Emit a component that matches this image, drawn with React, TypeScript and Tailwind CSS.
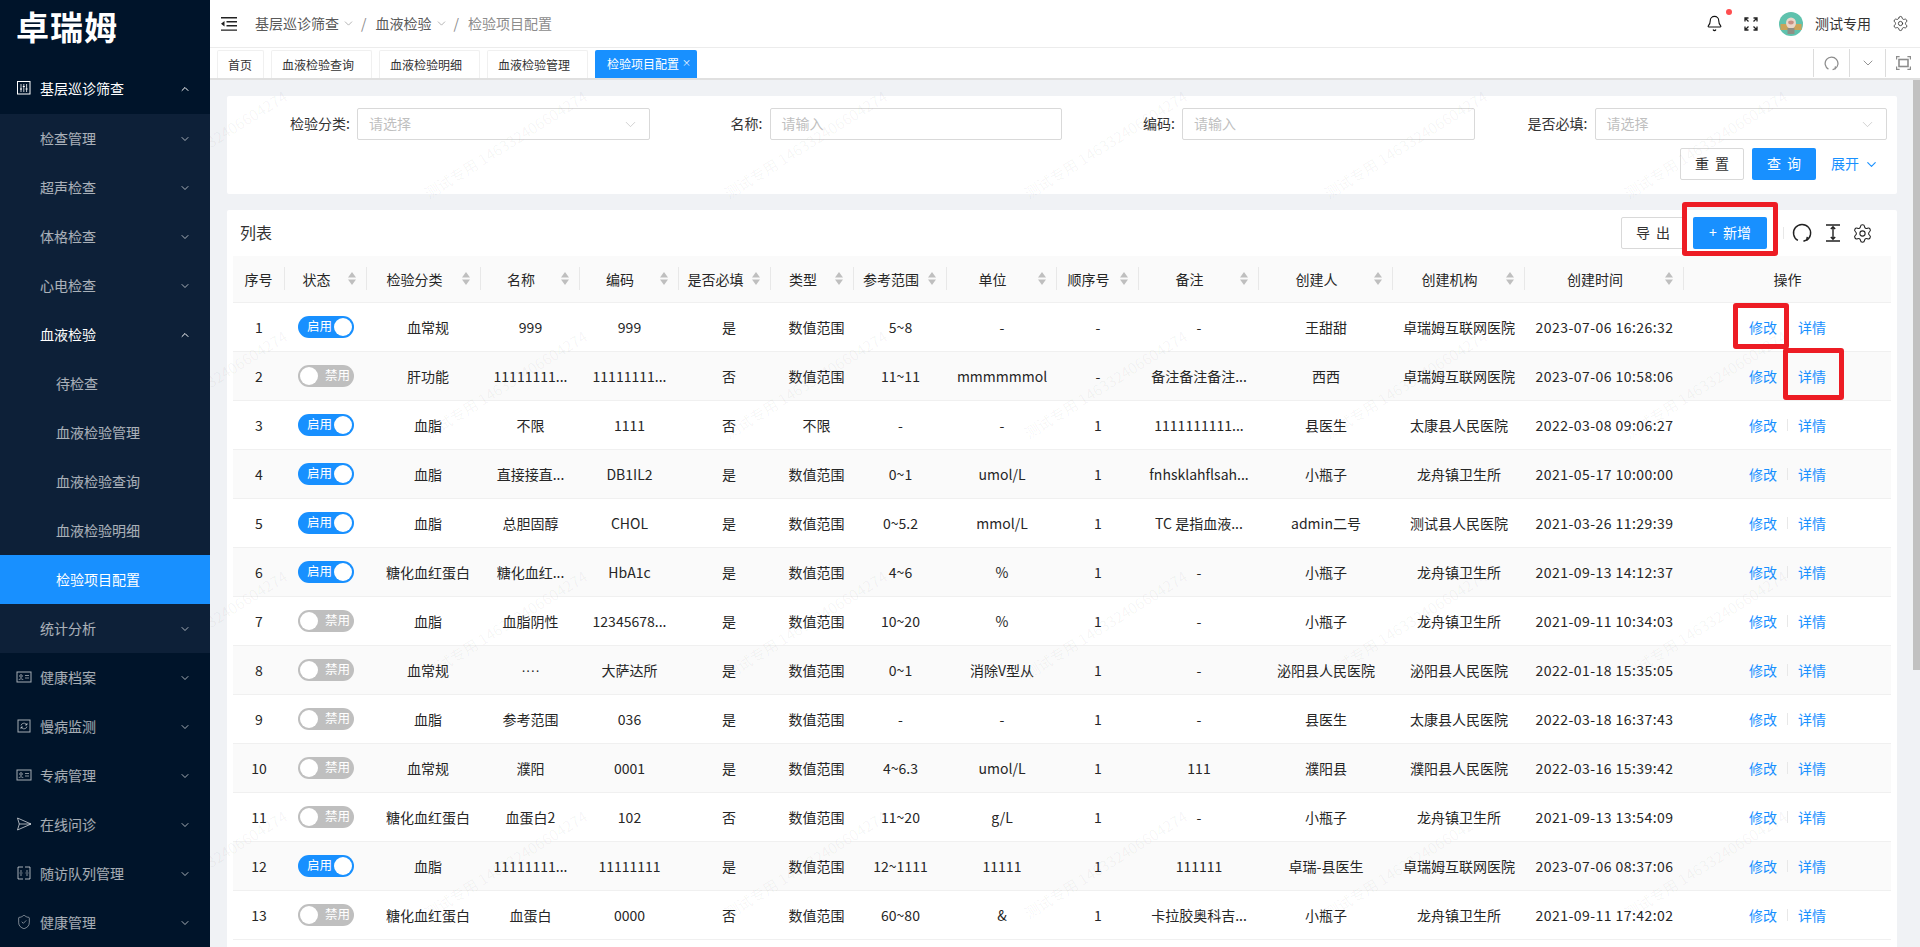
import React from "react";
import { ChevronDown, ChevronUp, Settings, ShieldCheck, Bell } from "lucide-react";

const FONT = "[font-family:'Noto_Sans_CJK_SC','Noto_Sans',sans-serif]";

const Icon = ({ children, size = 16, className = "" }: { children: React.ReactNode; size?: number; className?: string }) => (
  <svg width={size} height={size} viewBox="0 0 16 16" fill="none" stroke="currentColor" strokeWidth="1" className={className}>
    {children}
  </svg>
);

const SlidersIcon = () => (
  <Icon>
    <rect x="1.500" y="1.500" width="12.500" height="12.500" />
    <path d="M5 4v8M7.800 4v8M10.600 4v8" strokeWidth=".8" />
    <path d="M4 9h2M6.800 6.500h2M9.600 9h2" strokeWidth="1.200" />
  </Icon>
);
const CardIcon = () => (
  <Icon>
    <rect x="1" y="3" width="14" height="10" />
    <circle cx="5" cy="7" r="1.300" strokeWidth=".8" />
    <path d="M2.800 11c.3-1.600 4.100-1.600 4.400 0M9 6.500h4M9 9h4" strokeWidth=".8" />
  </Icon>
);
const RefreshBoxIcon = () => (
  <Icon>
    <rect x="2" y="2" width="12" height="12" />
    <path d="M5 7.500a3 3 0 0 1 5-1.500l1 1M11 8.500a3 3 0 0 1-5 1.500l-1-1M11 5v2h-2M5 11V9h2" strokeWidth=".8" />
  </Icon>
);
const SendIcon = () => (
  <Icon>
    <path d="M1.500 2 15 8 1.500 14l1.800-6zM3.300 8H15" />
  </Icon>
);
const FramesIcon = () => (
  <Icon>
    <path d="M7 2H2v12h5M9 2h5v12H9" />
    <path d="M5 5v2M5 9v2M11 5v2M11 9v2M3.500 8h3M9.500 8h3" strokeWidth=".8" />
  </Icon>
);

const topItems: [string, React.ReactNode][] = [
  ["健康档案", <CardIcon />],
  ["慢病监测", <RefreshBoxIcon />],
  ["专病管理", <CardIcon />],
  ["在线问诊", <SendIcon />],
  ["随访队列管理", <FramesIcon />],
  ["健康管理", <ShieldCheck size={16} strokeWidth={1.1} />],
];

const MenuRow = ({
  label,
  icon,
  open,
  indent = "pl-10",
  arrow = true,
  active = false,
  white = false,
}: {
  label: string;
  icon?: React.ReactNode;
  open?: boolean;
  indent?: string;
  arrow?: boolean;
  active?: boolean;
  white?: boolean;
}) => (
  <div
    className={`relative flex h-[49px] items-center text-sm ${indent} ${
      active ? "bg-[#1890ff] text-white" : white ? "text-white" : "text-white/65"
    }`}
  >
    {icon && <span className="absolute left-4 top-4 h-4 w-4">{icon}</span>}
    <span className="flex-1 pb-[2px]">{label}</span>
    {arrow && (
      <span className="mr-[19px]">
        {open ? <ChevronUp size={12} strokeWidth={2} /> : <ChevronDown size={12} strokeWidth={2} />}
      </span>
    )}
  </div>
);

const Sidebar = () => (
  <aside className="z-10 h-full w-[210px] shrink-0 overflow-hidden bg-[#00142a]">
    <div className="flex h-16 items-start pl-[16px] pt-[3px]">
      <span className="text-[33px] font-bold leading-[46px] tracking-[1px] text-white">卓瑞姆</span>
    </div>
    <MenuRow label="基层巡诊筛查" icon={<SlidersIcon />} open white />
    <div className="mt-px bg-[#0d2038]">
      <MenuRow label="检查管理" />
      <MenuRow label="超声检查" />
      <MenuRow label="体格检查" />
      <MenuRow label="心电检查" />
      <MenuRow label="血液检验" open white />
      <MenuRow label="待检查" indent="pl-14" arrow={false} />
      <MenuRow label="血液检验管理" indent="pl-14" arrow={false} />
      <MenuRow label="血液检验查询" indent="pl-14" arrow={false} />
      <MenuRow label="血液检验明细" indent="pl-14" arrow={false} />
      <MenuRow label="检验项目配置" indent="pl-14" arrow={false} active />
      <MenuRow label="统计分析" />
    </div>
    {topItems.map(([label, icon]) => (
      <MenuRow key={label} label={label} icon={icon} />
    ))}
  </aside>
);

const ReloadIcon = ({ size = 18, stroke = 1.3 }: { size?: number; stroke?: number }) => (
  <svg width={size} height={size} viewBox="0 0 18 18" fill="none" stroke="currentColor" strokeWidth={stroke}>
    <path d="M5.300 15.700A7.700 7.700 0 1 1 13 15.600" />
    <path d="M10.300 16.400 13.200 15.300 13.800 12.500" />
  </svg>
);

const Header = () => (
  <div className="flex h-[48px] items-center border-b border-[#ececec] bg-white pl-[11px] text-sm">
    <svg width="16" height="14" viewBox="0 0 16 14" fill="currentColor" className="text-[#222]">
      <path d="M0 0h16v1.400H0zM5.500 4H16v1.400H5.500zM5.500 8H16v1.400H5.500zM0 12.400h16v1.400H0zM0 6.700 3.500 4v5.400z" />
    </svg>
    <span className="ml-[18px] pb-[2px] text-[#595959]">基层巡诊筛查</span>
    <ChevronDown size={13} strokeWidth={1.2} className="ml-[3px] text-[#8c8c8c]" />
    <span className="ml-[6px] mr-[9px] pb-[2px] text-[#8c8c8c]">/</span>
    <span className="pb-[2px] text-[#595959]">血液检验</span>
    <ChevronDown size={13} strokeWidth={1.2} className="ml-[3px] text-[#8c8c8c]" />
    <span className="ml-[6px] mr-[9px] pb-[2px] text-[#8c8c8c]">/</span>
    <span className="pb-[2px] text-[#8c8c8c]">检验项目配置</span>
    <div className="ml-auto flex items-center">
      <span className="relative text-[#111]">
        <Bell size={17} strokeWidth={1.6} />
        <span className="absolute -right-[9px] -top-[6px] h-[6px] w-[6px] rounded-full bg-[#ff4d4f]" />
      </span>
      <svg width="14" height="14" viewBox="0 0 14 14" fill="none" stroke="#222" strokeWidth="1.3" className="ml-[21px]">
        <path d="M1 4.500V1h3.500M1 1l3.500 3.500M13 4.500V1H9.500M13 1 9.500 4.500M1 9.500V13h3.500M1 13l3.500-3.500M13 9.500V13H9.500M13 13 9.500 9.500" />
      </svg>
      <svg width="24" height="24" viewBox="0 0 24 24" className="ml-[21px]">
        <circle cx="12" cy="12" r="12" fill="#5fc2ad" />
        <rect x="1.500" y="12" width="21" height="6" fill="#c9a45a" />
        <ellipse cx="12" cy="11" rx="5" ry="5.500" fill="#ead7c9" />
        <ellipse cx="12" cy="10.500" rx="2.800" ry="1.900" fill="#c98f82" />
        <rect x="8.500" y="16" width="7" height="6" fill="#8e8f85" />
      </svg>
      <span className="ml-3 pb-[2px] text-[#333]">测试专用</span>
      <Settings size={17} strokeWidth={1.2} className="ml-[21px] mr-[11px] text-[#333]" />
    </div>
  </div>
);

const tabs = ["首页", "血液检验查询", "血液检验明细", "血液检验管理"];

const TabBar = () => (
  <div className="flex h-[32px] border-b-2 border-[#e0e0e0] bg-white pl-[7px] text-xs">
    {tabs.map((t, i) => (
      <div
        key={t}
        className={`mt-[2px] mr-[7px] flex h-[28px] items-center rounded-t-[2px] border border-b-0 border-[#f0f0f0] pl-[10px] text-[#333] ${
          i === 0 ? "w-[47px]" : "w-[101px]"
        }`}
      >
        {t}
      </div>
    ))}
    <div className="mt-[2px] flex h-[28px] w-[102px] items-center rounded-t-[2px] bg-[#1890ff] pl-[12px] text-white">
      检验项目配置
      <span className="mb-[3px] ml-[3px] text-[9px] leading-[12px]">×</span>
    </div>
    <div className="ml-auto flex h-full">
      <div className="my-[1px] flex h-[28px] w-[36px] items-center justify-center border-l border-[#dcdcdc] text-[#8c8c8c]">
        <ReloadIcon size={15} stroke={1.5} />
      </div>
      <div className="my-[1px] flex h-[28px] w-[36px] items-center justify-center border-l border-[#dcdcdc] text-[#8c8c8c]">
        <ChevronDown size={16} strokeWidth={1.4} />
      </div>
      <div className="my-[1px] flex h-[28px] w-[35px] items-center justify-center border-l border-[#dcdcdc] text-[#8c8c8c]">
        <svg width="15" height="14" viewBox="0 0 15 14" fill="none" stroke="currentColor" strokeWidth="1.200">
          <path d="M.600 3.500V.600h3M11.400.600h3v2.900M14.400 10.500v2.900h-3M3.600 13.400h-3v-2.900" />
          <rect x="3" y="3.500" width="9" height="7" strokeWidth="1.600" />
        </svg>
      </div>
    </div>
  </div>
);

const Field = ({ label, placeholder, select }: { label: string; placeholder: string; select?: boolean }) => (
  <div className="flex h-8 items-center">
    <label className="w-[120px] shrink-0 pb-[2px] pr-[7px] text-right text-sm text-[#333]">{label}:</label>
    <div className="flex h-8 flex-1 items-center rounded-[2px] border border-[#d9d9d9] bg-white pl-[11px] pr-[10px] text-sm text-[#bfbfbf]">
      <span className="flex-1 pb-[2px]">{placeholder}</span>
      {select && <ChevronDown size={17} strokeWidth={1} className="text-[#bfbfbf]" />}
    </div>
  </div>
);

const FilterCard = () => (
  <div className="h-[98px] rounded-[2px] bg-white px-[10px] pt-[12px]">
    <div className="grid grid-cols-4">
      <Field label="检验分类" placeholder="请选择" select />
      <Field label="名称" placeholder="请输入" />
      <Field label="编码" placeholder="请输入" />
      <Field label="是否必填" placeholder="请选择" select />
    </div>
    <div className="mt-[8px] flex items-center justify-end pr-[8px] text-sm">
      <button className="h-8 w-16 rounded-[2px] border border-[#d9d9d9] bg-white pb-[2px] text-[#333] [word-spacing:3px]">重 置</button>
      <button className="ml-2 h-8 w-16 rounded-[2px] bg-[#1890ff] pb-[2px] text-white [word-spacing:3px]">查 询</button>
      <span className="ml-[15px] pb-[2px] text-[#1890ff]">展开</span>
      <ChevronDown size={15} strokeWidth={1.8} className="ml-[5px] text-[#1890ff]" />
    </div>
  </div>
);

type Row = (string | boolean)[];
const rows: Row[] = [
  [true, "血常规", "999", "999", "是", "数值范围", "5~8", "-", "-", "-", "王甜甜", "卓瑞姆互联网医院", "2023-07-06 16:26:32"],
  [false, "肝功能", "11111111...", "11111111...", "否", "数值范围", "11~11", "mmmmmmol", "-", "备注备注备注...", "西西", "卓瑞姆互联网医院", "2023-07-06 10:58:06"],
  [true, "血脂", "不限", "1111", "否", "不限", "-", "-", "1", "1111111111...", "县医生", "太康县人民医院", "2022-03-08 09:06:27"],
  [true, "血脂", "直接接直...", "DB1IL2", "是", "数值范围", "0~1", "umol/L", "1", "fnhsklahflsah...", "小瓶子", "龙舟镇卫生所", "2021-05-17 10:00:00"],
  [true, "血脂", "总胆固醇", "CHOL", "是", "数值范围", "0~5.2", "mmol/L", "1", "TC 是指血液...", "admin二号", "测试县人民医院", "2021-03-26 11:29:39"],
  [true, "糖化血红蛋白", "糖化血红...", "HbA1c", "是", "数值范围", "4~6", "%", "1", "-", "小瓶子", "龙舟镇卫生所", "2021-09-13 14:12:37"],
  [false, "血脂", "血脂阴性", "12345678...", "是", "数值范围", "10~20", "%", "1", "-", "小瓶子", "龙舟镇卫生所", "2021-09-11 10:34:03"],
  [false, "血常规", "····", "大萨达所", "是", "数值范围", "0~1", "消除V型从", "1", "-", "泌阳县人民医院", "泌阳县人民医院", "2022-01-18 15:35:05"],
  [false, "血脂", "参考范围", "036", "是", "数值范围", "-", "-", "1", "-", "县医生", "太康县人民医院", "2022-03-18 16:37:43"],
  [false, "血常规", "濮阳", "0001", "是", "数值范围", "4~6.3", "umol/L", "1", "111", "濮阳县", "濮阳县人民医院", "2022-03-16 15:39:42"],
  [false, "糖化血红蛋白", "血蛋白2", "102", "否", "数值范围", "11~20", "g/L", "1", "-", "小瓶子", "龙舟镇卫生所", "2021-09-13 13:54:09"],
  [true, "血脂", "11111111...", "11111111", "是", "数值范围", "12~1111", "11111", "1", "111111", "卓瑞-县医生", "卓瑞姆互联网医院", "2023-07-06 08:37:06"],
  [false, "糖化血红蛋白", "血蛋白", "0000", "否", "数值范围", "60~80", "&", "1", "卡拉胶奥科吉...", "小瓶子", "龙舟镇卫生所", "2021-09-11 17:42:02"],
];

const columns: [string, number, boolean][] = [
  ["序号", 52, false],
  ["状态", 82, true],
  ["检验分类", 114, true],
  ["名称", 99, true],
  ["编码", 99, true],
  ["是否必填", 92, true],
  ["类型", 83, true],
  ["参考范围", 93, true],
  ["单位", 110, true],
  ["顺序号", 82, true],
  ["备注", 120, true],
  ["创建人", 134, true],
  ["创建机构", 132, true],
  ["创建时间", 159, true],
  ["操作", 207, false],
];

const SortCarets = () => (
  <svg width="8" height="13" viewBox="0 0 8 13" fill="#bfbfbf" className="shrink-0">
    <path d="M4 0 8 5.500H0zM4 13 0 7.500h8z" />
  </svg>
);

const Switch = ({ on }: { on: boolean }) => (
  <div
    className={`mx-auto flex h-[22px] w-[56px] items-center rounded-full px-[2px] text-[12.5px] text-white ${
      on ? "bg-[#1890ff]" : "bg-[#bfbfbf]"
    }`}
  >
    {on ? (
      <>
        <span className="ml-[5px] flex-1 pb-[1px]">启用</span>
        <span className="h-[18px] w-[18px] rounded-full bg-white" />
      </>
    ) : (
      <>
        <span className="h-[18px] w-[18px] rounded-full bg-white" />
        <span className="ml-[5px] flex-1 pb-[1px]">禁用</span>
      </>
    )}
  </div>
);

const shifted = new Set([1, 4, 5]);

const ListCard = () => (
  <div className="flex-1 rounded-t-[2px] bg-white px-[6px]">
    <div className="flex h-[46px] items-center">
      <span className="ml-[7px] pb-[2px] text-base text-[#333]">列表</span>
      <div className="ml-auto flex items-center text-sm">
        <button className="h-8 w-16 rounded-[2px] border border-[#d9d9d9] bg-white pb-[2px] text-[#333] [word-spacing:3px]">导 出</button>
        <button className="ml-2 h-8 w-[74px] rounded-[2px] bg-[#1890ff] pb-[2px] text-white [word-spacing:3px]">+ 新增</button>
        <span className="ml-4 h-3 w-px bg-[#e8e8e8]" />
        <span className="ml-[8px] text-[#222]">
          <svg width="20" height="20" viewBox="0 0 18 18" fill="none" stroke="currentColor" strokeWidth="1.300">
            <path d="M5.300 15.700A7.700 7.700 0 1 1 13 15.600" />
            <path d="M10.300 16.400 13.200 15.300 13.800 12.500" />
          </svg>
        </span>
        <svg width="16" height="18" viewBox="0 0 16 18" fill="none" stroke="#222" strokeWidth="1.400" className="ml-[13px]">
          <path d="M1 1h14M1 17h14M8 3v12M5.800 5 8 2.800 10.200 5M5.800 13 8 15.200 10.200 13" />
        </svg>
        <Settings size={21} strokeWidth={1.200} className="ml-[11px] mr-[18px] text-[#222]" />
      </div>
    </div>
    <table className="w-full table-fixed border-collapse text-sm text-[#262626]">
      <colgroup>
        {columns.map(([n, w]) => (
          <col key={n} width={w} />
        ))}
      </colgroup>
      <thead>
        <tr className="h-[46px] border-b border-[#f0f0f0] bg-[#fafafa]">
          {columns.map(([n, , sort], i) => (
            <th key={n} className="p-0 font-normal">
              <div
                className={`flex h-[23px] items-center ${sort ? "pr-[10px]" : ""} ${
                  i === columns.length - 1 ? "" : "border-r border-[#e8e8e8]"
                }`}
              >
                <span className="flex-1 whitespace-nowrap text-center">{n}</span>
                {sort && <SortCarets />}
              </div>
            </th>
          ))}
        </tr>
      </thead>
      <tbody>
        {rows.map((r, idx) => (
          <tr key={idx} className={`h-[49px] border-b border-[#f0f0f0] ${idx % 2 ? "bg-[#fafafa]" : "bg-white"}`}>
            <td className="p-0 text-center">{idx + 1}</td>
            {r.map((c, i) => (
              <td
                key={i}
                className={`whitespace-nowrap p-0 text-center ${shifted.has(i) ? "pl-2" : ""} ${
                  i === r.length - 1 ? "tracking-[0.45px]" : ""
                } ${c === "····" ? "[font-family:'Liberation_Sans',sans-serif]" : ""}`}
              >
                {typeof c === "boolean" ? <Switch on={c} /> : c}
              </td>
            ))}
            <td className="p-0">
              <div className="flex items-center justify-center text-[#1890ff]">
                <span>修改</span>
                <span className="mx-[10px] h-3 w-px bg-[#e8e8e8]" />
                <span>详情</span>
              </div>
            </td>
          </tr>
        ))}
      </tbody>
    </table>
  </div>
);

const watermarks: { x: number; y: number }[] = [];
for (const y of [203, 443, 683, 923]) {
  for (const x of [131, 431, 731, 1031, 1331, 1631]) watermarks.push({ x: x - 210, y });
}

const Watermarks = () => (
  <div className="pointer-events-none absolute inset-0 overflow-hidden">
    {watermarks.map((w, i) => (
      <span
        key={i}
        className="absolute origin-bottom-left -rotate-[32deg] whitespace-nowrap text-[15px] leading-[20px] text-black/[0.045]"
        style={{ left: w.x, top: w.y - 20 }}
      >
        测试专用 146332406604274
      </span>
    ))}
  </div>
);

const RedBox = ({ className }: { className: string }) => (
  <div className={`pointer-events-none absolute rounded-[3px] border-[5px] border-[#ed1c24] ${className}`} />
);

export default function App() {
  return (
    <div className={`flex h-screen w-full overflow-hidden bg-[#f0f2f5] ${FONT}`}>
      <Sidebar />
      <main className="relative flex h-full min-w-0 flex-1 flex-col">
        <Header />
        <TabBar />
        <div className="flex flex-1 flex-col gap-4 overflow-hidden pl-[17px] pr-[23px] pt-4">
          <FilterCard />
          <ListCard />
        </div>
        <Watermarks />
        <div className="absolute right-0 top-[80px] h-[590px] w-[7px] bg-[#c1c1c1]" />
        <RedBox className="left-[1472px] top-[202px] h-[54px] w-[96px]" />
        <RedBox className="left-[1523px] top-[303px] h-[46px] w-[56px]" />
        <RedBox className="left-[1573px] top-[348px] h-[52px] w-[61px]" />
      </main>
    </div>
  );
}
